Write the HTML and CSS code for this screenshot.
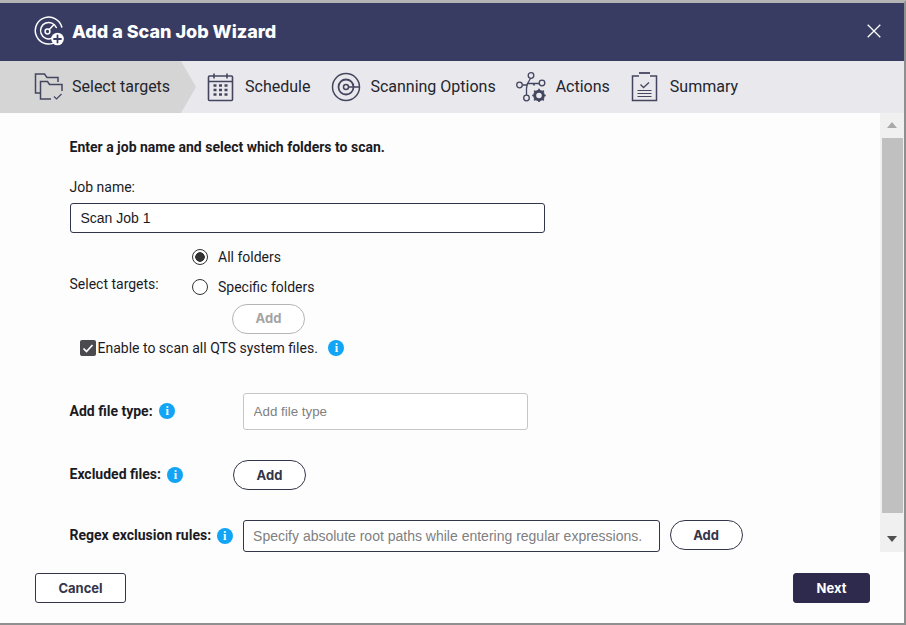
FILE: index.html
```html
<!DOCTYPE html>
<html lang="en">
<head>
<meta charset="utf-8">
<title>Add a Scan Job Wizard</title>
<link rel="stylesheet" href="styles.css">
</head>
<body>
<div class="dialog">
  <header class="titlebar">
    <svg class="title-icon" viewBox="0 0 30 30" fill="none" stroke="#fff" stroke-width="1.5" stroke-linecap="round">
      <path d="M19 27.400A13.500 13.500 0 1 1 27.800 11"/>
      <path d="M17.500 22.400A8.200 8.200 0 1 1 22.300 11.500"/>
      <circle cx="13.500" cy="15.500" r="2.400"/>
      <path d="M15.300 13.500 20 8.500"/>
      <circle cx="23.500" cy="23" r="6.300" fill="#fff" stroke="none"/>
      <path d="M23.500 19.500v7M20 23h7" stroke="#383c62" stroke-width="1.800"/>
    </svg>
    <h1 class="title">Add a Scan Job Wizard</h1>
    <svg class="close" viewBox="0 0 14 14" stroke="#fff" stroke-width="1.3"><path d="M.7.7l12.6 12.6M13.3.7.7 13.3"/></svg>
  </header>
  <nav class="steps">
    <div class="step step-active">
      <svg class="step-icon" viewBox="0 0 30 30" fill="none" stroke="#44465f" stroke-width="1.5">
        <path d="M6 21H1.500V2h9l2.500 3.500h11V10"/>
        <path d="M17 27H6.500V9.500h7l2 3h12.500V19"/>
        <path d="M20 24.500l2.500 2.500 5-5" stroke-width="1.2"/>
      </svg>
      <span>Select targets</span>
    </div>
    <div class="step step-schedule">
      <svg class="step-icon" viewBox="0 0 27 30" fill="none" stroke="#44465f" stroke-width="1.6">
        <rect x="1.500" y="4" width="24" height="24.500" rx="1"/>
        <path d="M1.500 9.500h24M7 1.500v5M20 1.500v5"/>
        <path d="M6.500 13.500h3M12 13.500h3M17.500 13.500h3M6.500 18h3M12 18h3M17.500 18h3M6.500 22.500h3M12 22.500h3M17.500 22.500h3" stroke-width="2.400"/>
      </svg>
      <span>Schedule</span>
    </div>
    <div class="step step-options">
      <svg class="step-icon" viewBox="0 0 30 30" fill="none" stroke="#44465f" stroke-width="1.500">
        <circle cx="15" cy="15" r="13.500"/>
        <circle cx="15" cy="15" r="7.500" stroke-width="1.800"/>
        <circle cx="15" cy="15" r="2.500"/>
        <path d="M17.500 15H28.500"/>
      </svg>
      <span>Scanning Options</span>
    </div>
    <div class="step step-actions">
      <svg class="step-icon" viewBox="0 0 30 30" fill="none" stroke="#44465f" stroke-width="1.300">
        <circle cx="15" cy="3.500" r="2.800"/>
        <circle cx="3.500" cy="13" r="2.800"/>
        <circle cx="26" cy="11" r="2.800"/>
        <circle cx="10.500" cy="26" r="2.800"/>
        <path d="M14.500 6.500 11.500 11.500H17M6.300 13h5M11.500 11.500l-1 4.500v7M17 11.500l1.500 2M23.500 11.500H17"/>
        <circle cx="23" cy="23.500" r="4.300" stroke-width="3"/>
        <path d="M23 16.700v13.600M16.200 23.500h13.600M18.200 18.700l9.600 9.600M27.800 18.700l-9.600 9.600" stroke-width="1.700" stroke-dasharray="2 9.600"/>
      </svg>
      <span>Actions</span>
    </div>
    <div class="step step-summary">
      <svg class="step-icon" viewBox="0 0 27 30" fill="none" stroke="#44465f" stroke-width="1.500">
        <path d="M8 4H1.500v24.500h24V4H19"/>
        <path d="M8 1h11" stroke-width="1.800"/>
        <path d="M9.500 12.500l3 3 5.500-5" stroke-width="1.300"/>
        <path d="M6.500 18.500h14M6.500 21.500h14M6.500 24.500h14" stroke-width="1.200"/>
      </svg>
      <span>Summary</span>
    </div>
  </nav>
  <div class="body">
    <main class="content">
      <p class="intro">Enter a job name and select which folders to scan.</p>
      <label class="job-label" for="job">Job name:</label>
      <input class="job-input" id="job" type="text" value="Scan Job 1">
      <div class="targets">
        <span class="targets-label">Select targets:</span>
        <div class="targets-options">
          <label class="radio-row"><span class="radio radio-on"></span>All folders</label>
          <label class="radio-row"><span class="radio"></span>Specific folders</label>
          <button class="pill pill-disabled" type="button">Add</button>
        </div>
      </div>
      <div class="check-row">
        <span class="checkbox"><svg viewBox="0 0 16 16" fill="none" stroke="#fff" stroke-width="1.700"><path d="M3.500 8.500l3 3 6-6.500"/></svg></span>
        <span>Enable to scan all QTS system files.</span>
        <span class="info info-check">i</span>
      </div>
      <div class="row row-type">
        <strong class="row-label">Add file type:</strong>
        <span class="info info-type">i</span>
        <input class="field field-type" type="text" placeholder="Add file type">
      </div>
      <div class="row row-excluded">
        <strong class="row-label">Excluded files:</strong>
        <span class="info info-excl">i</span>
        <button class="pill pill-excl" type="button">Add</button>
      </div>
      <div class="row row-regex">
        <strong class="row-label">Regex exclusion rules:</strong>
        <span class="info info-regex">i</span>
        <input class="field field-regex" type="text" placeholder="Specify absolute root paths while entering regular expressions.">
        <button class="pill pill-regex" type="button">Add</button>
      </div>
    </main>
    <div class="scrollbar">
      <span class="arrow arrow-up"></span>
      <span class="thumb"></span>
      <span class="arrow arrow-down"></span>
    </div>
  </div>
  <footer class="footer">
    <button class="btn btn-cancel" type="button">Cancel</button>
    <button class="btn btn-next" type="button">Next</button>
  </footer>
</div>
</body>
</html>
```
FILE: styles.css
```css
* { box-sizing: border-box; }
html, body { margin: 0; padding: 0; height: 100%; overflow: hidden; background: #fff; }
body { font-family: Roboto, "Liberation Sans", sans-serif; font-size: 14px; color: #1b1b1f; }
.dialog {
  width: 906px; height: 625px; display: flex; flex-direction: column;
  background: #fdfdfe;
  border-top: 3px solid #b4b4b4;
  border-right: 2px solid #8f8f8f;
  border-bottom: 2px solid #8f8f8f;
}
.titlebar { height: 58px; flex: none; background: #383c62; display: flex; align-items: center; padding: 0 23px 0 34px; color: #fff; }
.title-icon { width: 30px; height: 30px; flex: none; margin-top: -2px; }
.title { flex: 1; margin: -2px 0 0 8px; font-family: Inter, Roboto, sans-serif; font-size: 18px; font-weight: 800; }
.close { width: 14px; height: 14px; flex: none; margin-top: -2px; }
.steps { height: 52px; flex: none; background: #e8e8ed; display: flex; align-items: center; font-size: 16px; color: #24252e; }
.step { display: flex; align-items: center; height: 100%; }
.step span { margin-bottom: 2px; }
.step-icon { width: 30px; height: 30px; flex: none; }
.step-active {
  width: 196px; padding-left: 34px; gap: 8px; background: #d5d5d5;
  clip-path: polygon(0 0, 181px 0, 196px 50%, 181px 100%, 0 100%);
}
.step-schedule { margin-left: 11px; gap: 11px; }
.step-schedule .step-icon { width: 27px; }
.step-options { margin-left: 21px; gap: 9px; }
.step-actions { margin-left: 20px; gap: 10px; }
.step-summary { margin-left: 21px; gap: 12px; }
.step-summary .step-icon { width: 27px; }
.body { flex: none; height: 439px; display: flex; }
.content { flex: 1; padding: 25px 0 0 70px; min-width: 0; }
.intro { margin: 0 0 0 -0.5px; font-size: 14px; font-weight: 700; line-height: 18px; }
.job-label { display: block; margin: 22px 0 0 -0.5px; line-height: 18px; }
.job-input {
  display: block; margin-top: 7px; width: 475px; height: 30px; padding: 0 9.500px;
  font: 14px "Liberation Sans", Arial, sans-serif; color: #1b1b1f; background: #fff;
  border: 1px solid #33354a; border-radius: 3px;
}
.targets { display: flex; margin-top: 9px; }
.targets-label { width: 122px; margin: 33px 0 0 -0.5px; line-height: 18px; flex: none; }
.targets-options { display: flex; flex-direction: column; margin-left: 0.5px; }
.radio-row { display: flex; align-items: center; height: 30px; gap: 10px; }
.radio { width: 16px; height: 16px; border: 1.500px solid #333; border-radius: 50%; background: #fff; flex: none; }
.radio-on { background: radial-gradient(circle, #333 0 4.500px, #fff 5px); }
.pill {
  width: 73px; height: 30px; padding: 0; border: 1px solid #33354a; border-radius: 15px; background: #fff;
  font: 700 13px Inter, Roboto, sans-serif; color: #33354a;
}
.pill-disabled { margin: 2px 0 0 40px; padding-bottom: 2px; border-color: #b5b5b5; color: #a4a4a4; }
.check-row { display: flex; align-items: center; margin: -1px 0 0 10px; height: 30px; line-height: 18px; }
.checkbox { width: 16px; height: 16px; margin-right: 1.500px; background: #4a4a4f; border-radius: 2px; flex: none; display: flex; }
.checkbox svg { width: 16px; height: 16px; }
.info {
  width: 16px; height: 16px; border-radius: 50%; background: #12a5f5; color: #fff; flex: none;
  font: 700 12px/16px "Liberation Serif", serif; text-align: center;
}
.info-check { margin-left: 10.500px; }
.row { display: flex; align-items: center; }
.row-label { font-weight: 700; line-height: 18px; margin: 0 0 2px -0.5px; }
.row-type { margin-top: 30px; height: 37px; }
.row-type .info { margin: 0 0 2px 6.500px; }
.field {
  height: 37px; padding: 0 9.500px; background: #fff; border: 1px solid #c6c6c6; border-radius: 3px;
  font: 13.333px "Liberation Sans", Arial, sans-serif; color: #333;
}
.field::placeholder { color: #808080; opacity: 1; }
.field-type { width: 285px; margin-left: 68px; }
.row-excluded { margin-top: 30px; height: 30px; }
.row-excluded .info { margin-left: 6.500px; }
.pill-excl { margin-left: 49.500px; }
.row-regex { margin-top: 30px; height: 32px; }
.row-regex .info { margin-left: 5.500px; }
.field-regex { width: 417px; height: 32px; margin-left: 10px; border-color: #33354a; font-size: 14px; }
.pill-regex { margin-left: 10px; align-self: flex-start; }
.scrollbar { width: 24px; flex: none; background: #f0f0f0; display: flex; flex-direction: column; align-items: center; padding: 0 1px; }
.arrow { width: 0; height: 0; border-left: 5.500px solid transparent; border-right: 5.500px solid transparent; flex: none; }
.arrow-up { margin-top: 9px; border-bottom: 6px solid #a9a9a9; }
.thumb { width: 21px; height: 375px; margin-top: 10px; background: #c0c0c0; }
.arrow-down { margin-top: 23px; border-top: 6px solid #505050; }
.footer { flex: 1; display: flex; justify-content: space-between; align-items: flex-start; padding: 21px 34px 0 35px; }
.btn { height: 30px; border-radius: 3px; font: 700 13px Inter, Roboto, sans-serif; padding: 0; }
.btn-cancel { width: 91px; background: #fff; border: 1px solid #33354a; color: #33354a; }
.btn-next { width: 77px; background: #2d2a4e; border: 1px solid #2d2a4e; color: #fff; }
```
